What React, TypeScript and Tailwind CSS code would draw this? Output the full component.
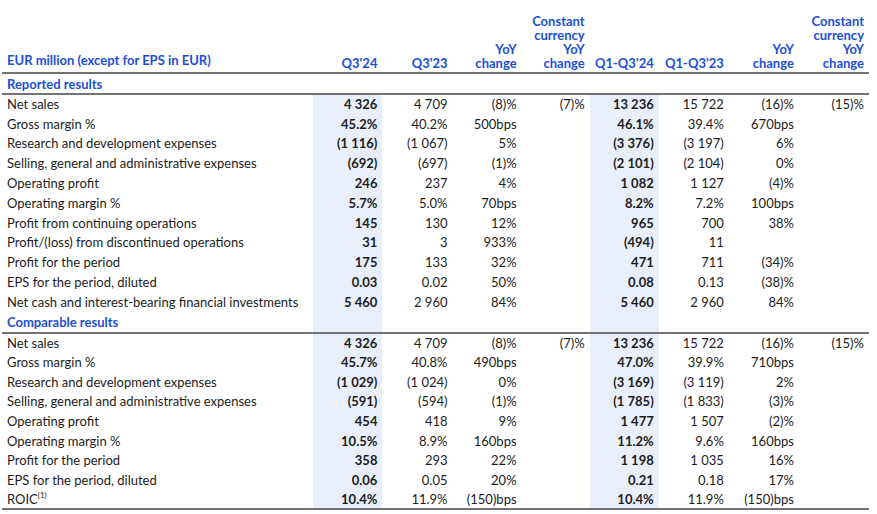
import React from "react";

type Row = { label: React.ReactNode; v: string[] };

const reported: Row[] = [
  { label: "Net sales", v: ["4 326", "4 709", "(8)%", "(7)%", "13 236", "15 722", "(16)%", "(15)%"] },
  { label: "Gross margin %", v: ["45.2%", "40.2%", "500bps", "", "46.1%", "39.4%", "670bps", ""] },
  { label: "Research and development expenses", v: ["(1 116)", "(1 067)", "5%", "", "(3 376)", "(3 197)", "6%", ""] },
  { label: "Selling, general and administrative expenses", v: ["(692)", "(697)", "(1)%", "", "(2 101)", "(2 104)", "0%", ""] },
  { label: "Operating profit", v: ["246", "237", "4%", "", "1 082", "1 127", "(4)%", ""] },
  { label: "Operating margin %", v: ["5.7%", "5.0%", "70bps", "", "8.2%", "7.2%", "100bps", ""] },
  { label: "Profit from continuing operations", v: ["145", "130", "12%", "", "965", "700", "38%", ""] },
  { label: "Profit/(loss) from discontinued operations", v: ["31", "3", "933%", "", "(494)", "11", "", ""] },
  { label: "Profit for the period", v: ["175", "133", "32%", "", "471", "711", "(34)%", ""] },
  { label: "EPS for the period, diluted", v: ["0.03", "0.02", "50%", "", "0.08", "0.13", "(38)%", ""] },
  { label: "Net cash and interest-bearing financial investments", v: ["5 460", "2 960", "84%", "", "5 460", "2 960", "84%", ""] },
];

const comparable: Row[] = [
  { label: "Net sales", v: ["4 326", "4 709", "(8)%", "(7)%", "13 236", "15 722", "(16)%", "(15)%"] },
  { label: "Gross margin %", v: ["45.7%", "40.8%", "490bps", "", "47.0%", "39.9%", "710bps", ""] },
  { label: "Research and development expenses", v: ["(1 029)", "(1 024)", "0%", "", "(3 169)", "(3 119)", "2%", ""] },
  { label: "Selling, general and administrative expenses", v: ["(591)", "(594)", "(1)%", "", "(1 785)", "(1 833)", "(3)%", ""] },
  { label: "Operating profit", v: ["454", "418", "9%", "", "1 477", "1 507", "(2)%", ""] },
  { label: "Operating margin %", v: ["10.5%", "8.9%", "160bps", "", "11.2%", "9.6%", "160bps", ""] },
  { label: "Profit for the period", v: ["358", "293", "22%", "", "1 198", "1 035", "16%", ""] },
  { label: "EPS for the period, diluted", v: ["0.06", "0.05", "20%", "", "0.21", "0.18", "17%", ""] },
  {
    label: (
      <>
        ROIC<sup className="-top-[6px] text-[8px]">(1)</sup>
      </>
    ),
    v: ["10.4%", "11.9%", "(150)bps", "", "10.4%", "11.9%", "(150)bps", ""],
  },
];

const widths = ["w-[311px]", "w-[69px]", "w-[70px]", "w-[69px]", "w-[68px]", "w-[69px]", "w-[70px]", "w-[70px]", "w-[70px]"];
const hl = (i: number) => i === 0 || i === 4;
const num = (s: string) => s.replace(/(\d) (\d)/g, "$1\u00a0$2");
const line = "border-b-2 border-[#737373]";

function Header() {
  const heads: string[][] = [
    ["Q3'24"],
    ["Q3'23"],
    ["YoY", "change"],
    ["Constant", "currency", "YoY", "change"],
    ["Q1-Q3'24"],
    ["Q1-Q3'23"],
    ["YoY", "change"],
    ["Constant", "currency", "YoY", "change"],
  ];
  return (
    <tr>
      <th className={`pl-[5px] pb-[2px] text-left align-bottom font-bold ${line}`}>EUR million (except for EPS in EUR)</th>
      {heads.map((h, i) => (
        <th key={i} className={`pr-[5px] pb-[2px] text-right align-bottom font-bold leading-[14px] ${line}`}>
          {h.map((l, j) => (
            <div key={j}>{l}</div>
          ))}
        </th>
      ))}
    </tr>
  );
}

function Section({ title, rows, rowH, shade, last }: { title: string; rows: Row[]; rowH: string; shade?: boolean; last?: boolean }) {
  return (
    <>
      <tr className="h-[21px]">
        <td className={`pl-[5px] font-bold text-[#1c4fd8] ${line}`}>{title}</td>
        {Array.from({ length: 8 }).map((_, i) => (
          <td key={i} className={`${line} ${hl(i) && shade ? "bg-[#e8effb]" : ""}`} />
        ))}
      </tr>
      {rows.map((r, ri) => {
        const b = last && ri === rows.length - 1 ? line : "";
        return (
          <tr key={ri} className={rowH}>
            <td className={`pl-[5px] text-left ${b}`}>{r.label}</td>
            {r.v.map((v, i) => (
              <td key={i} className={`pr-[5px] text-right ${b} ${hl(i) ? "bg-[#e8effb] font-bold" : ""}`}>
                {num(v)}
              </td>
            ))}
          </tr>
        );
      })}
    </>
  );
}

export default function App() {
  return (
    <div className="w-[877px] h-[514px] bg-white pl-[2px] pt-[14px] text-[#1c1c1c] text-[13px] font-['Lato',sans-serif]">
      <table className="table-fixed border-collapse w-[867px]">
        <colgroup>
          {widths.map((w, i) => (
            <col key={i} className={w} />
          ))}
        </colgroup>
        <thead className="text-[#1c4fd8]">
          <Header />
        </thead>
        <tbody className="leading-[16px]">
          <Section title="Reported results" rows={reported} rowH="h-[19.8px]" />
          <Section title="Comparable results" rows={comparable} rowH="h-[19.6px]" shade last />
        </tbody>
      </table>
    </div>
  );
}
